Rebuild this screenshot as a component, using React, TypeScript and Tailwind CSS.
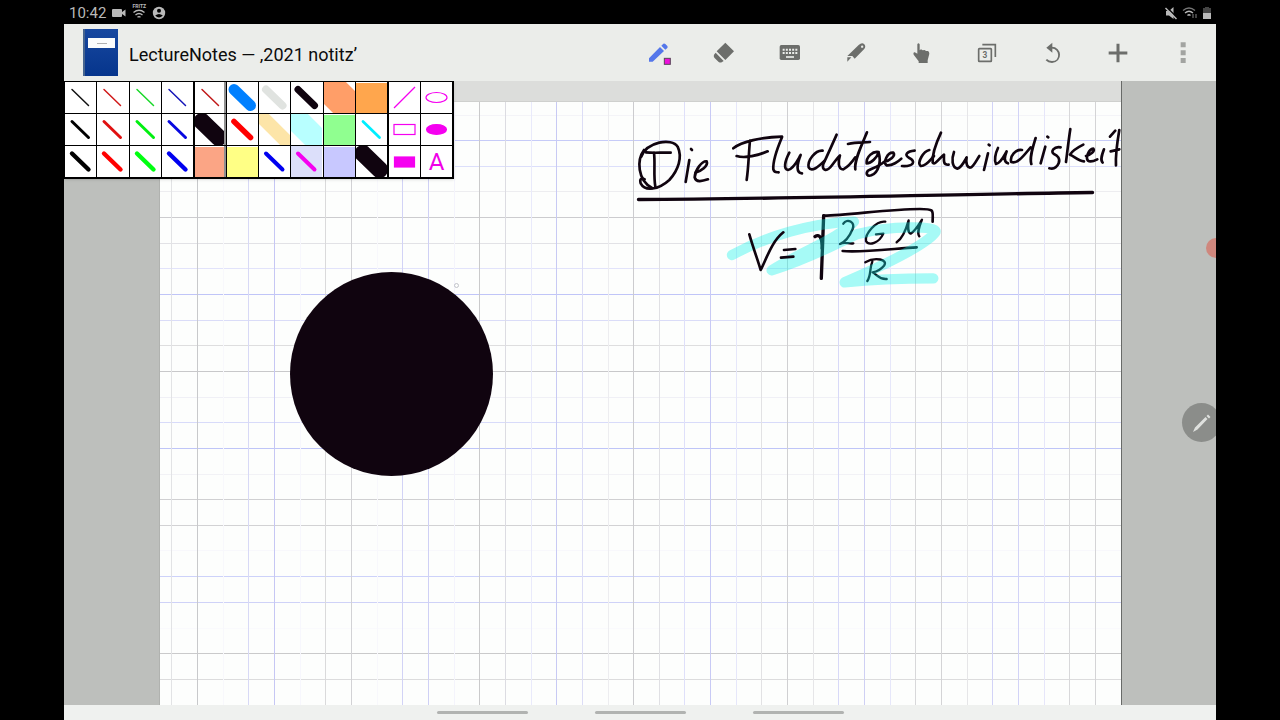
import type { ReactNode } from 'react'

const INK = '#10040f'
const MAGENTA = '#f500f0'

interface Pen {
  name: string
  color: string
  width?: number
  bg?: string
  fill?: boolean
  long?: boolean
}

const THIN_PENS: Pen[] = [
  { name: 'Black fine', color: '#111111', width: 1.5 },
  { name: 'Red fine', color: '#d01818', width: 1.5 },
  { name: 'Green fine', color: '#18d828', width: 1.5 },
  { name: 'Blue fine', color: '#1414b8', width: 1.5 },
  { name: 'Black medium', color: '#000000', width: 3 },
  { name: 'Red medium', color: '#e01010', width: 3 },
  { name: 'Green medium', color: '#00f010', width: 3 },
  { name: 'Blue medium', color: '#0808e0', width: 3 },
  { name: 'Black bold', color: '#000000', width: 4.4 },
  { name: 'Red bold', color: '#ff0000', width: 4.4 },
  { name: 'Green bold', color: '#00ff10', width: 4.4 },
  { name: 'Blue bold', color: '#0000f0', width: 4.4 },
]

const CUSTOM_PENS: Pen[] = [
  { name: 'Custom red', color: '#c01818', width: 1.5 },
  { name: 'Custom blue marker', color: '#0080ff', width: 11 },
  { name: 'Custom grey marker', color: '#e0e3e0', width: 8 },
  { name: 'Custom black marker', color: INK, width: 7 },
  { name: 'Custom orange wide', color: '#ff9e68', width: 31, long: true },
  { name: 'Custom orange fill', color: '#ffa64d', fill: true },
  { name: 'Custom black wide', color: INK, width: 17 },
  { name: 'Custom red marker', color: '#ff0000', width: 5.6 },
  { name: 'Custom sand marker', color: '#fde5a8', width: 14, long: true },
  { name: 'Custom cyan wide', color: '#b8ffff', width: 24, long: true },
  { name: 'Custom green fill', color: '#90ff90', fill: true },
  { name: 'Custom cyan', color: '#00eeff', width: 2.8 },
  { name: 'Custom salmon fill', color: '#fba585', fill: true },
  { name: 'Custom yellow fill', color: '#ffff85', fill: true },
  { name: 'Custom blue', color: '#0000f0', width: 4 },
  { name: 'Custom magenta', color: MAGENTA, width: 4, bg: '#dcdffa' },
  { name: 'Custom lavender fill', color: '#c8c8ff', fill: true },
  { name: 'Custom black broad', color: INK, width: 17 },
]

const V_LINES: [number, string][] = [
  [171, '#e2e3e5'], [197, '#c8c9cb'], [223, '#f8f8fc'], [248, '#d8d9f6'], [274, '#c6c7f4'],
  [300, '#f7f7fd'], [325, '#dadadb'], [351, '#d2d2d5'], [377, '#f8f8fc'], [402, '#d2d3f6'],
  [428, '#cfd0f5'], [454, '#f4f4fc'], [479, '#cacacb'], [505, '#dcdce2'], [531, '#e9eafb'],
  [556, '#c8caf4'], [582, '#dcddf6'], [608, '#ededf0'], [633, '#cccccf'], [659, '#e0e0e4'],
  [684, '#dfe0fa'], [710, '#c8caf5'], [736, '#e6e7fa'], [761, '#e2e2e4'], [787, '#d0d0d2'],
  [813, '#e6e6e8'], [838, '#d8d9f8'], [864, '#cfd0f4'], [890, '#e6e7fa'], [915, '#d8d8da'],
  [941, '#d4d4d6'], [967, '#e6e6e8'], [992, '#d2d3f7'], [1018, '#d2d3f7'], [1044, '#e6e6fa'],
  [1069, '#d8d8da'], [1095, '#d4d4d6'],
]

const H_LINES: [number, string][] = [
  [115, '#f4f4f8'], [140, '#c6cbf8'], [166, '#dcdffb'], [191, '#ededf0'], [217, '#cccccf'],
  [243, '#e2e2e6'], [268, '#e2e3fb'], [294, '#c0c5f8'], [320, '#dadcf8'], [345, '#dededf'],
  [371, '#c8c8ca'], [397, '#f0f0f6'], [422, '#d8dbfa'], [448, '#bfc5f8'], [474, '#f2f2f6'],
  [499, '#d0d0d2'], [525, '#d2d2d4'], [550, '#f8f8fc'], [576, '#cdd2fa'], [602, '#cfd2f8'],
  [628, '#fafafd'], [653, '#cacacb'], [679, '#dcdcdd'],
]

function PenButton({ pen, divider }: { pen: Pen; divider?: boolean }) {
  return (
    <button
      aria-label={pen.name}
      className={`h-[31px] overflow-hidden bg-white ${divider ? 'border-r-2 border-[#909090]' : ''}`}
    >
      <svg viewBox="0 0 31 31" className="block h-[31px] w-[31px]">
        {pen.bg && <rect width="31" height="31" fill={pen.bg} />}
        {pen.fill ? (
          <rect y="1" width="31" height="30" fill={pen.color} />
        ) : (
          <path
            d={pen.long ? 'M0 0L31 31' : 'M7 7.500L23.500 23.500'}
            stroke={pen.color}
            strokeWidth={pen.width}
            strokeLinecap="round"
          />
        )}
      </svg>
    </button>
  )
}

function ShapeButton({ name, children }: { name: string; children: ReactNode }) {
  return (
    <button aria-label={name} className="flex h-[31px] items-center justify-center bg-white">
      <svg viewBox="0 0 31 31" className="h-[31px] w-[31px]" fill="none" stroke={MAGENTA} strokeWidth="1.2">
        {children}
      </svg>
    </button>
  )
}

function Palette() {
  return (
    <div className="absolute top-0 left-0 z-10 flex gap-0.5 border-t border-r-2 border-b-2 border-l border-black bg-black shadow-sm">
      <div className="grid w-32 grid-cols-4 gap-px">
        {THIN_PENS.map((pen) => (
          <PenButton key={pen.name} pen={pen} />
        ))}
      </div>
      <div className="grid w-48 grid-cols-6 gap-px">
        {CUSTOM_PENS.map((pen, i) => (
          <PenButton key={pen.name} pen={pen} divider={i % 6 === 0} />
        ))}
      </div>
      <div className="grid w-[63px] grid-cols-2 gap-px">
        <ShapeButton name="Line">
          <path d="M5 26L26 5" />
        </ShapeButton>
        <ShapeButton name="Ellipse">
          <ellipse cx="15.500" cy="15.500" rx="10.500" ry="5" />
        </ShapeButton>
        <ShapeButton name="Rectangle">
          <rect x="5" y="10.500" width="21" height="10" />
        </ShapeButton>
        <ShapeButton name="Filled ellipse">
          <ellipse cx="15.500" cy="15.500" rx="10" ry="4.800" fill={MAGENTA} />
        </ShapeButton>
        <ShapeButton name="Filled rectangle">
          <rect x="5.500" y="11" width="20" height="10" fill={MAGENTA} />
        </ShapeButton>
        <button className="h-[31px] bg-white pt-px text-center text-2xl leading-[30px] text-[#f000e8]">A</button>
      </div>
    </div>
  )
}

function Tool({ name, children }: { name: string; children: ReactNode }) {
  return (
    <button aria-label={name} className="flex h-full items-center justify-center">
      <svg viewBox="0 0 72 72" className="h-6 w-6 overflow-visible" fill="#6c6e6b">
        {children}
      </svg>
    </button>
  )
}

function Toolbar() {
  return (
    <header className="flex h-[57px] shrink-0 items-center justify-between bg-[#ebedea] pl-[19px]">
      <div className="flex items-center gap-[11px]">
        <div className="h-[47px] w-[35px] border-l-2 border-[#47658f] bg-linear-to-b from-[#1748a0] to-[#06358c] px-[3px] pt-[9px]">
          <div className="flex h-2.5 items-center justify-center bg-[#fbfcfc]">
            <div className="h-px w-2.5 bg-[#b0b0b0]" />
          </div>
        </div>
        <h1 className="pt-1 text-lg whitespace-nowrap text-[#0c0c0c]">LectureNotes — ‚2021 notitz’</h1>
      </div>
      <nav className="grid h-full w-[590px] grid-cols-9">
        <Tool name="Pen">
          <path d="M6 62V52L39 18L51 30L17 62Z M43 14L49 8Q52 6 55 9L61 15Q63 18 61 21L55 26Z" fill="#5577ea" />
          <rect x="52" y="52" width="18" height="18" fill="#ee10dc" stroke="#5a465a" strokeWidth="3" />
        </Tool>
        <Tool name="Eraser">
          <path d="M40 5L66 31L40 57L14 31Z M11 35L35 60L29 64Q25 66 20 63L7 50Q4 46 6 41Z" />
        </Tool>
        <Tool name="Keyboard">
          <path d="M10 12H61Q66 12 66 17V52Q66 57 61 57H10Q5 57 5 52V17Q5 12 10 12Z" />
          <path d="M14 26H58M14 36H58" stroke="#ebedea" strokeWidth="6" strokeDasharray="6 3.500" />
          <path d="M24 48H48" stroke="#ebedea" strokeWidth="5" />
        </Tool>
        <Tool name="Knife">
          <path
            fillRule="evenodd"
            d="M13 45L47 12Q57 3 64 10Q70 18 63 25L35 53L28 45Z M54 17A3.500 3.500 0 1 0 61 17A3.500 3.500 0 1 0 54 17Z"
          />
          <path d="M13 49H25L13 62Z" />
        </Tool>
        <Tool name="Hand">
          <path d="M25 10Q28 3 32 10V28L36 25L41 28L47 27L51 30L57 30Q61 32 61 38L56 58V66H29V61L14 41Q12 36 15 34Q18 32 25 38Z" />
        </Tool>
        <Tool name="Pages">
          <rect x="11" y="23" width="38" height="38" rx="2" fill="none" stroke="#6c6e6b" strokeWidth="5" />
          <path d="M22 11H61V48" fill="none" stroke="#6c6e6b" strokeWidth="5" />
          <text x="30" y="51" fontSize="25" fontWeight="700" textAnchor="middle">
            3
          </text>
        </Tool>
        <Tool name="Undo">
          <path d="M19 20L37 5V35Z" />
          <path d="M35 20C63 20 66 61 36 63Q25 63 19 56" fill="none" stroke="#6c6e6b" strokeWidth="5.500" />
        </Tool>
        <Tool name="Add">
          <path d="M8 36H64M36 8V64" stroke="#6c6e6b" strokeWidth="9" />
        </Tool>
        <Tool name="More">
          <path d="M29 4h15v15h-15zM29 28h15v15h-15zM29 51h15v15h-15z" fill="#a2a4a1" />
        </Tool>
      </nav>
    </header>
  )
}

function StatusBar() {
  return (
    <div className="flex h-6 shrink-0 items-center justify-between pt-0.5 pr-1 pl-[5px] text-[#b9b9b9]">
      <div className="flex items-center gap-1.5">
        <span className="text-[15px] leading-6">10:42</span>
        <svg viewBox="0 0 14 10" className="h-2.5 w-3.5" fill="currentColor">
          <path d="M1 1H9Q10 1 10 2V4L13.500 1.500V8.500L10 6V8Q10 9 9 9H1Q0 9 0 8V2Q0 1 1 1Z" />
        </svg>
        <div className="flex w-3.5 flex-col items-center pb-1">
          <span className="text-[5px] leading-[5px] font-bold">FRITZ</span>
          <svg viewBox="0 0 14 10" className="h-2.5 w-3.5" fill="none" stroke="currentColor" strokeWidth="1.3">
            <path d="M1.500 3.500Q7 -1 12.500 3.500M3.500 6Q7 3 10.500 6M5.500 8.300Q7 7 8.500 8.300" />
          </svg>
        </div>
        <svg viewBox="0 0 14 14" className="h-3.5 w-3.5">
          <circle cx="7" cy="7" r="6.200" fill="currentColor" />
          <circle cx="7" cy="4.800" r="2" fill="#000" />
          <path d="M3.200 9.500Q7 6.500 10.800 9.500Q7 13.500 3.200 9.500Z" fill="#000" />
        </svg>
      </div>
      <div className="flex items-center gap-1">
        <svg viewBox="0 0 14 14" className="h-3.5 w-3.5">
          <path d="M2 5H5L9.500 1V13L5 9.500H2Z" fill="currentColor" />
          <path d="M2.500 1L13 11.500" stroke="#000" strokeWidth="1.400" />
          <path d="M1.500 2L12.500 13" stroke="currentColor" strokeWidth="1.500" />
        </svg>
        <svg viewBox="0 0 16 14" className="h-3.5 w-4" fill="none" stroke="currentColor" strokeWidth="1.300">
          <path d="M1 4.500Q7 -0.500 13 4.500" stroke="#777" />
          <path d="M3 7Q7 3.500 11 7M5.500 9.500Q7 8 8.500 9.500" />
          <path d="M11 8V12M14 12V8" stroke="#666" />
        </svg>
        <svg viewBox="0 0 10 14" className="h-3.5 w-2.5">
          <path d="M1 2H3V1H7V2H9V7H1Z" fill="#444" />
          <path d="M1 7H9V13H1Z" fill="currentColor" />
        </svg>
      </div>
    </div>
  )
}

function Handwriting() {
  return (
    <g fill="none" stroke={INK} strokeLinecap="round" strokeLinejoin="round">
      {/* "Die Flucht" */}
      <g transform="translate(630 120) scale(0.3333)" strokeWidth="8">
        <path d="M34 110C50 66 125 52 143 80C158 112 145 150 118 180C85 210 45 215 32 190C28 178 35 172 44 178" />
        <path d="M42 90C20 120 22 180 66 204" />
        <path d="M48 97C70 100 95 97 122 98M72 98C76 130 70 165 76 200" />
        <path d="M178 120L167 186M183 87L186 90" />
        <path d="M196 158C212 155 236 138 230 124C216 122 195 150 194 172C198 188 216 184 234 178" />
        <path d="M310 85C335 64 395 52 456 50M360 62C356 100 356 140 350 180M320 108C345 116 385 106 413 94" />
        <path d="M456 52C442 85 428 120 430 148C434 160 440 156 446 157" />
        <path d="M478 98C464 125 460 148 474 150C492 146 504 118 512 105C500 135 498 158 516 160" />
        <path d="M578 92C555 90 532 122 536 142C545 158 566 140 584 122" />
        <path d="M620 44C604 80 588 115 580 132C574 150 590 158 606 136C616 122 626 110 630 106C624 124 624 148 640 148C656 140 668 124 676 112" />
        <path d="M711 37C696 75 672 120 676 148M654 72C680 66 700 68 720 66" />
      </g>
      {/* "geschwindigkeit" */}
      <g transform="translate(870 120) scale(0.3333)" strokeWidth="8">
        <path d="M26 96C8 92 -12 112 -10 130C5 130 20 112 26 98C34 125 26 158 4 166C-8 170 -14 162 -6 152C10 144 28 138 42 126" />
        <path d="M42 126C60 122 78 108 70 98C52 96 38 128 50 136C66 138 86 124 94 116" />
        <path d="M134 92C112 94 100 104 118 114C138 124 132 140 96 138" />
        <path d="M178 90C160 94 140 128 152 138C168 140 182 118 192 108" />
        <path d="M213 38C198 70 186 105 188 128C194 138 210 112 222 104C222 120 218 136 236 134" />
        <path d="M252 96C244 118 246 142 262 146C276 142 284 122 290 112C286 130 292 146 304 142C314 134 320 120 328 108" />
        <path d="M354 100L342 150M356 74L359 76" />
        <path d="M384 84C376 100 372 122 378 132C392 130 402 108 410 94C404 110 400 126 414 130" />
        <path d="M456 90C438 86 418 110 424 126C444 134 466 100 482 82M497 54C488 84 478 112 484 132" />
        <path d="M526 80L512 130M532 50L535 52" />
        <path d="M572 82C552 78 540 96 552 102C562 106 572 116 566 130C560 144 550 148 538 145" />
        <path d="M601 27C596 60 592 95 588 126M640 74C624 82 606 94 600 104C612 108 624 122 642 124" />
        <path d="M648 108C662 104 676 94 670 86C656 88 646 112 654 122C662 128 674 122 682 118" />
        <path d="M702 88C696 104 690 120 698 128M720 50L736 32" />
        <path d="M748 30C742 65 736 100 738 136M722 94L748 88" />
      </g>
      <path d="M638.500 199.500C780 199 940 194.500 1092.500 192.500" strokeWidth="3.400" />
      <g transform="translate(710 195) scale(0.3333)" strokeWidth="8">
        <path d="M341 62C420 60 540 42 630 42C676 42 668 46 668 80" />
        <path d="M315 125C328 116 338 128 336 160M341 62L334 250" strokeWidth="10" />
        <path d="M400 86C412 68 436 82 428 102C418 126 402 142 390 147C404 138 416 148 430 145" strokeWidth="7" />
        <path d="M526 80C498 76 464 118 468 138C476 154 508 144 520 116L498 118" strokeWidth="7" />
        <path d="M560 142C575 132 588 104 596 76C594 96 592 112 602 116C616 108 626 90 636 74C628 94 620 112 628 124" strokeWidth="7" />
        <path d="M398 168C450 174 560 160 620 157" />
        <path d="M487 200C478 222 484 240 472 258M466 202C496 184 536 194 522 212C512 224 498 230 488 232C502 240 508 254 530 252" strokeWidth="7" />
        <path
          d="M66 180C170 124 300 84 432 80C390 128 270 172 185 226C300 190 370 150 440 118C540 90 690 92 676 112C650 150 500 220 404 262C500 252 590 250 670 250"
          stroke="#0af5ea"
          strokeWidth="31"
          opacity="0.36"
        />
        <path d="M118 118C130 160 145 200 152 225C170 190 185 140 220 112" />
        <path d="M222 165L256 162M213 188L250 185" />
      </g>
    </g>
  )
}

function NotePage() {
  return (
    <svg
      viewBox="160 81 961 624"
      preserveAspectRatio="xMinYMin slice"
      role="img"
      aria-label="Notebook page"
      className="block h-full w-full"
    >
      <rect x="160" y="81" width="961" height="624" fill="#fdfefd" />
      {H_LINES.map(([y, color]) => (
        <rect key={y} x="160" y={y} width="961" height="1" fill={color} />
      ))}
      {V_LINES.map(([x, color]) => (
        <rect key={x} x={x} y="102" width="1" height="603" fill={color} />
      ))}
      <rect x="160" y="81" width="961" height="21" fill="#dcdddb" />
      <rect x="160" y="101" width="961" height="1" fill="#cfd0ce" />
      <ellipse cx="391.500" cy="374" rx="101.500" ry="102" fill={INK} />
      <circle cx="456.500" cy="285.500" r="2" fill="none" stroke="#b4b6be" strokeWidth="0.800" />
      <Handwriting />
    </svg>
  )
}

export default function App() {
  return (
    <div className="h-screen bg-black px-16 font-['Roboto',sans-serif]">
      <div className="flex h-full flex-col">
        <StatusBar />
        <Toolbar />
        <main className="relative flex min-h-0 flex-1 overflow-hidden bg-[#bdbfbc]">
          <Palette />
          <div className="w-24 shrink-0 border-r border-[#b0b2af]" />
          <div className="min-w-0 flex-1">
            <NotePage />
          </div>
          <div className="w-[95px] shrink-0 border-l border-[#686a68]" />
          <div className="absolute top-[157px] -right-2.5 h-5 w-5 rounded-full bg-[#cf877d]" />
          <button
            aria-label="Pen menu"
            className="absolute top-[322px] -right-[5px] flex h-[39px] w-[39px] items-center justify-center rounded-full bg-[#8b8d8a]"
          >
            <svg viewBox="0 0 20 20" className="h-5 w-5" fill="#dfe1de">
              <path d="M1 19L3 14.500L13.500 4L15.500 6L5.500 16.500Z M14.500 3L16 1.500L18.500 4L17 5.500Z" />
            </svg>
          </button>
        </main>
        <footer className="flex h-[15px] shrink-0 items-center justify-center gap-[67px] bg-[#eff1ef]">
          <button aria-label="Recent apps" className="h-[3px] w-[91px] rounded-full bg-[#b1b3b1]" />
          <button aria-label="Home" className="h-[3px] w-[91px] rounded-full bg-[#b1b3b1]" />
          <button aria-label="Back" className="h-[3px] w-[91px] rounded-full bg-[#b1b3b1]" />
        </footer>
      </div>
    </div>
  )
}
